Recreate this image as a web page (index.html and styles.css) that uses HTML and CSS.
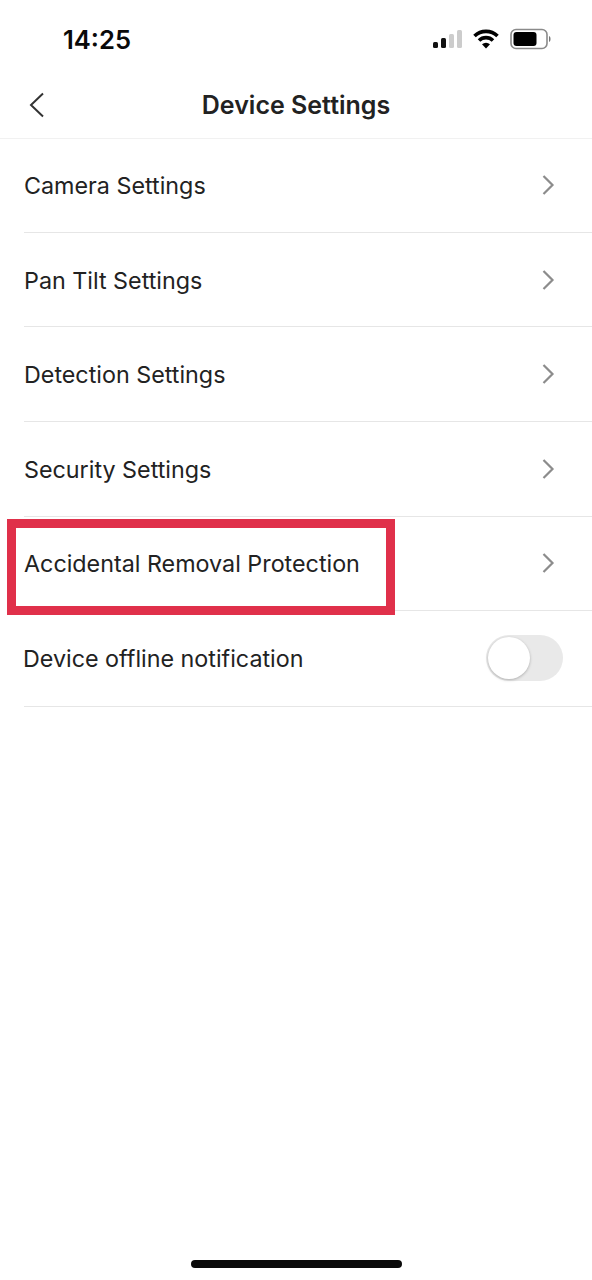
FILE: index.html

```html
<!DOCTYPE html>
<html lang="en">
<head>
  <meta charset="UTF-8" />
  <title>Device Settings</title>
  <link rel="stylesheet" href="styles.css">
</head>
<body>

<div class="phone">
  <div class="status-bar">
    <div class="time">14:25</div>
    <div class="status-icons">
      <svg class="signal" width="29" height="20" viewBox="0 0 29 20">
        <rect x="0" y="13" width="5" height="6" rx="1.5" fill="#111"/>
        <rect x="8" y="9" width="5" height="10" rx="1.5" fill="#111"/>
        <rect x="16" y="5" width="5" height="14" rx="1.5" fill="#ccc"/>
        <rect x="24" y="1" width="5" height="18" rx="1.5" fill="#ccc"/>
      </svg>
      <svg class="wifi" width="26" height="20" viewBox="0 0 26 20">
        <path d="M1.5 7 A16.5 16.5 0 0 1 24.5 7" fill="none" stroke="#000" stroke-width="3.6"/>
        <path d="M6 11.5 A10 10 0 0 1 20 11.5" fill="none" stroke="#000" stroke-width="3.6"/>
        <path d="M9 15.2 L13 19.5 L17 15.2 A6 6 0 0 0 9 15.2 Z" fill="#000"/>
      </svg>
      <svg class="battery" width="42" height="22" viewBox="0 0 42 22">
        <rect x="1" y="1.5" width="36" height="19" rx="5" fill="none" stroke="#8a8a8a" stroke-width="1.6"/>
        <rect x="3.5" y="4" width="23" height="14" rx="3" fill="#000"/>
        <path d="M39 8 C41 8.6 41 13.4 39 14 Z" fill="#777"/>
      </svg>
    </div>
  </div>

  <header class="nav">
    <svg class="back" width="16" height="26" viewBox="0 0 16 26">
      <path d="M14 1.5 L2 13 L14 24.5" fill="none" stroke="#333" stroke-width="2"/>
    </svg>
    <div class="nav-title">Device Settings</div>
  </header>

  <main class="list">
    <div class="row">
      <span class="row-label">Camera Settings</span>
      <svg class="chevron" width="14" height="22" viewBox="0 0 14 22"><path d="M2.5 2 L11.5 11 L2.5 20" fill="none" stroke="#8c8c8c" stroke-width="2.2"/></svg>
    </div>
    <div class="row">
      <span class="row-label">Pan Tilt Settings</span>
      <svg class="chevron" width="14" height="22" viewBox="0 0 14 22"><path d="M2.5 2 L11.5 11 L2.5 20" fill="none" stroke="#8c8c8c" stroke-width="2.2"/></svg>
    </div>
    <div class="row">
      <span class="row-label">Detection Settings</span>
      <svg class="chevron" width="14" height="22" viewBox="0 0 14 22"><path d="M2.5 2 L11.5 11 L2.5 20" fill="none" stroke="#8c8c8c" stroke-width="2.2"/></svg>
    </div>
    <div class="row">
      <span class="row-label">Security Settings</span>
      <svg class="chevron" width="14" height="22" viewBox="0 0 14 22"><path d="M2.5 2 L11.5 11 L2.5 20" fill="none" stroke="#8c8c8c" stroke-width="2.2"/></svg>
    </div>
    <div class="row">
      <span class="row-label">Accidental Removal Protection</span>
      <svg class="chevron" width="14" height="22" viewBox="0 0 14 22"><path d="M2.5 2 L11.5 11 L2.5 20" fill="none" stroke="#8c8c8c" stroke-width="2.2"/></svg>
      <div class="highlight"></div>
    </div>
    <div class="row row-toggle">
      <span class="row-label">Device offline notification</span>
      <div class="toggle"><div class="knob"></div></div>
    </div>
  </main>

  <div class="home-indicator"></div>
</div>

</body>
</html>
```

FILE: styles.css

```css
* {
  box-sizing: border-box;
}

body {
  margin: 0;
  background: #fff;
  font-family: 'Inter', 'Liberation Sans', sans-serif;
  color: #1f1f1f;
}

.phone {
  width: 592px;
  height: 1280px;
  display: flex;
  flex-direction: column;
  overflow: hidden;
}

.status-bar {
  height: 72px;
  padding: 0 40px 0 63px;
  display: flex;
  align-items: center;
  justify-content: space-between;
  flex-shrink: 0;
}

.time {
  font-size: 25.6px;
  font-weight: 600;
  color: #0a0a0a;
  margin-top: 6px;
}

.status-icons {
  display: flex;
  align-items: center;
  gap: 11px;
  margin-top: 6px;
}

.nav {
  height: 67px;
  display: flex;
  align-items: center;
  justify-content: center;
  border-bottom: 1px solid #f1f1f1;
  position: relative;
  flex-shrink: 0;
}

.back {
  position: absolute;
  left: 29px;
  top: 20px;
}

.nav-title {
  font-size: 25px;
  font-weight: 600;
  color: #222;
}

.row {
  height: 94.6px;
  margin-left: 24px;
  padding-right: 37px;
  display: flex;
  align-items: center;
  justify-content: space-between;
  border-bottom: 1px solid #e6e6e6;
  position: relative;
}

.row:first-child {
  height: 93.8px;
}

.row-label {
  font-size: 23.3px;
  color: #222;
  margin-top: 1px;
}

.row-toggle {
  padding-right: 29px;
  height: 95.5px;
}

.row-toggle .row-label {
  margin-left: -1px;
  margin-top: 0;
}

.highlight {
  position: absolute;
  left: -17px;
  top: 2.4px;
  width: 388px;
  height: 96px;
  border: 9px solid #e0304a;
}

.toggle {
  width: 77px;
  height: 46px;
  border-radius: 23px;
  background: #e9e9e9;
  padding: 2px;
}

.knob {
  width: 42px;
  height: 42px;
  border-radius: 50%;
  background: #fff;
  box-shadow: 0 1px 3px rgba(0, 0, 0, 0.25);
}

.home-indicator {
  position: absolute;
  left: 191px;
  top: 1260px;
  width: 211px;
  height: 8px;
  border-radius: 4px;
  background: #0a0a0a;
}
```
